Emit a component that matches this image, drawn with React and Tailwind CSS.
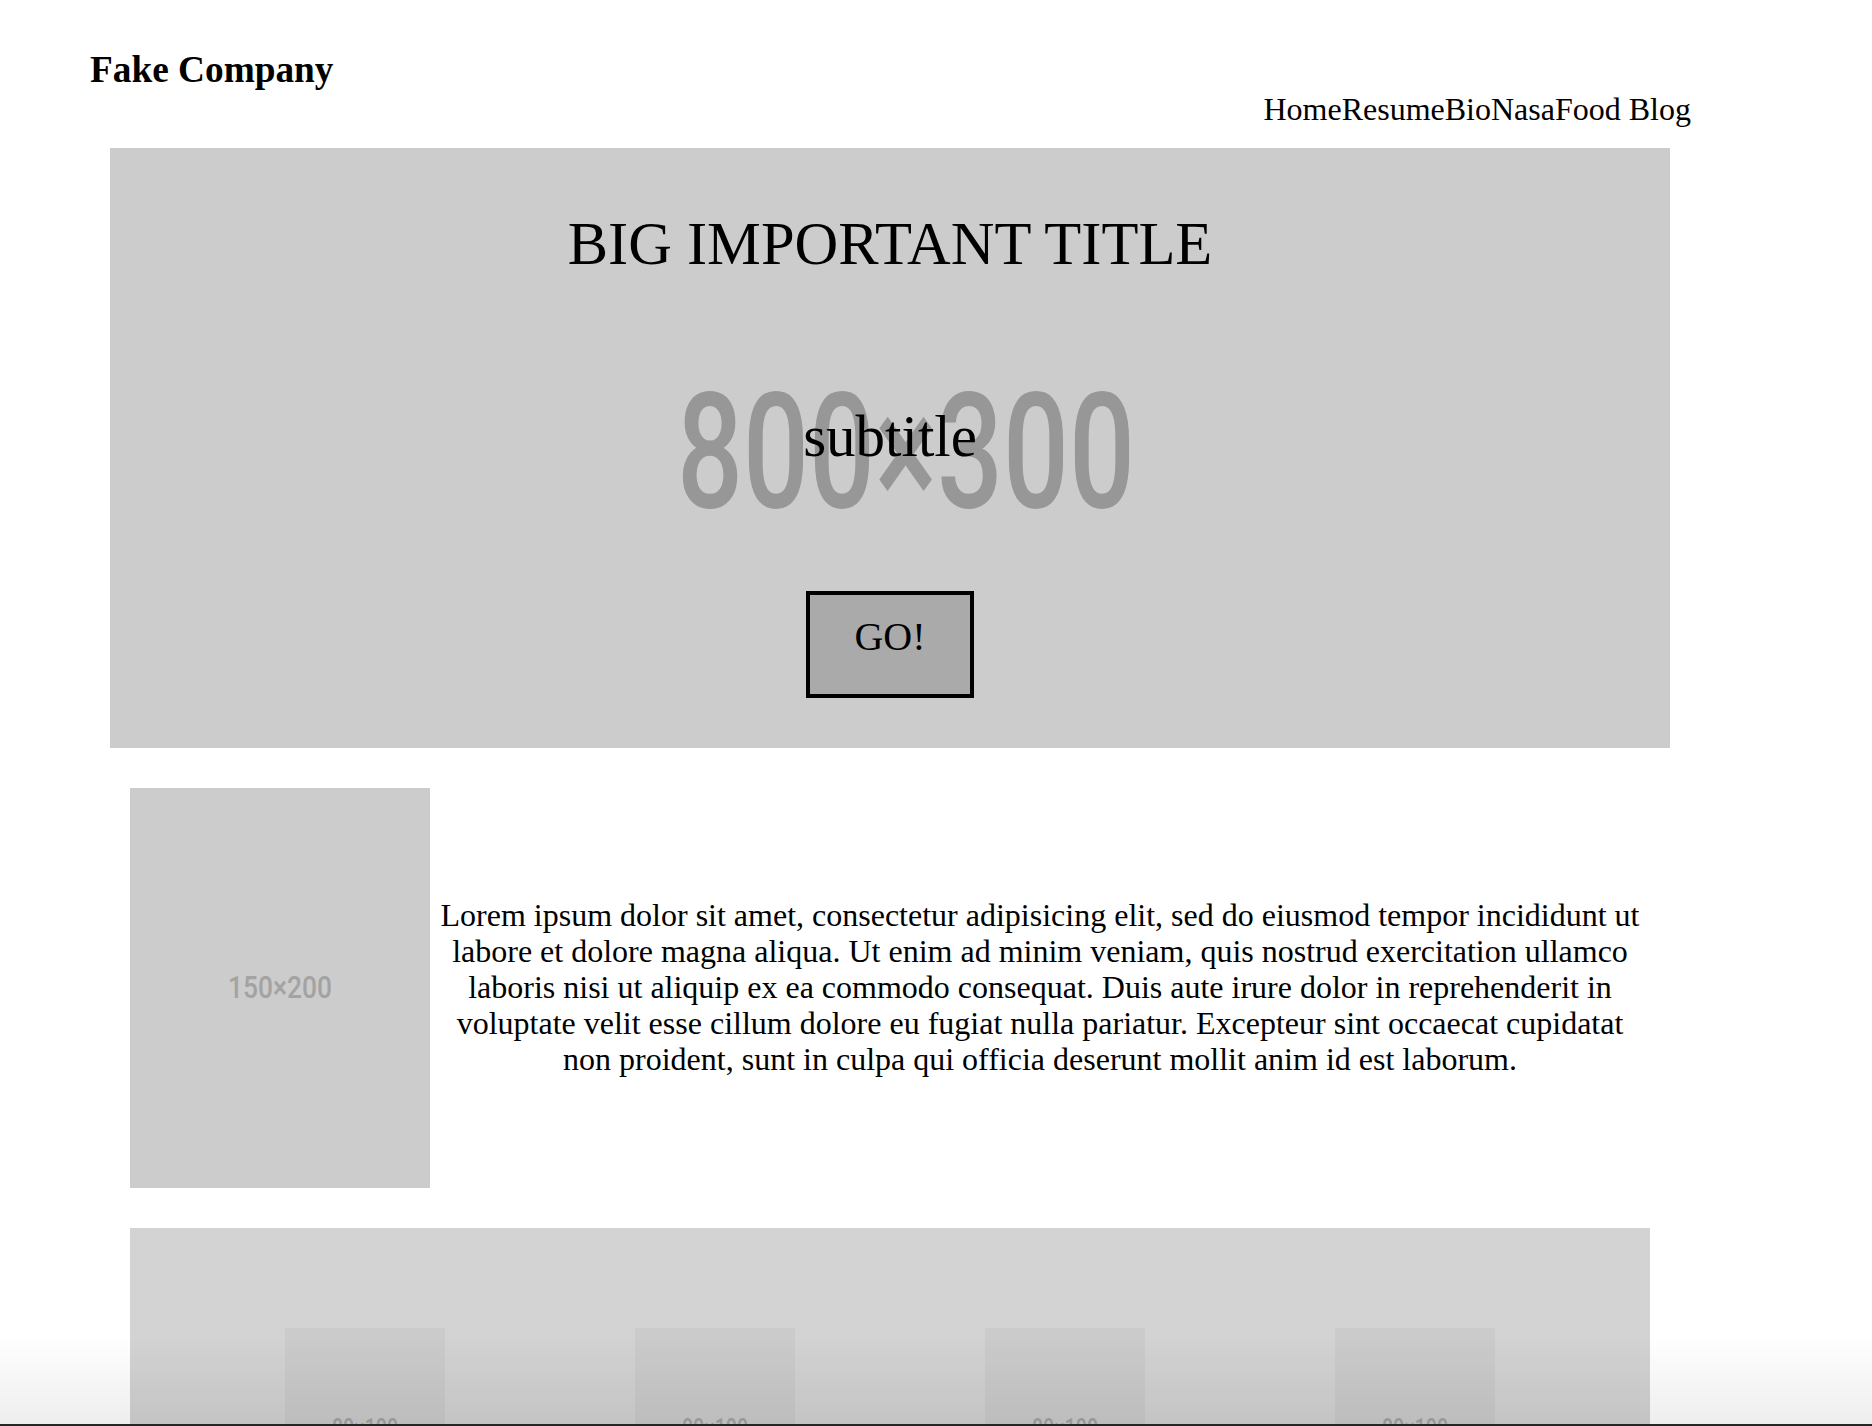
import React from 'react';

// placeholder label drawn like the placehold.it condensed digits
function PlaceLabel({ text, width, height, size, color }) {
  return (
    <svg width={width} height={height} viewBox={`0 0 ${width} ${height}`} className="block overflow-visible">
      <text
        x="0"
        y={height}
        fontSize={size}
        textLength={width}
        lengthAdjust="spacingAndGlyphs"
        fill={color}
        fontFamily="Roboto, 'Liberation Sans', sans-serif"
        fontWeight="500"
      >
        {text}
      </text>
    </svg>
  );
}

const navLinks = ['Home', 'Resume', 'Bio', 'Nasa', 'Food Blog'];

export default function App() {
  return (
    <div className="relative min-h-screen bg-white text-black font-['Liberation_Serif',serif]">
      <header className="pt-[48px] pl-[90px] pr-[181px]">
        <h1 className="text-[37.3px] leading-[44px] font-bold">Fake Company</h1>
        <nav className="-mt-px flex justify-end text-[32px] leading-[36px]">
          {navLinks.map((link) => (
            <a key={link} href="#" className="text-black no-underline">
              {link}
            </a>
          ))}
        </nav>
      </header>

      {/* hero */}
      <section className="relative mt-[21px] ml-[110px] w-[1560px] h-[600px] bg-[#cccccc]">
        <div className="absolute left-[567px] top-[244px]">
          <PlaceLabel text="800×300" width={458} height={115} size={162} color="#979797" />
        </div>
        <div className="relative flex flex-col items-center pt-[62px]">
          <h2 className="text-[60.5px] leading-[68px] font-normal">BIG IMPORTANT TITLE</h2>
          <h3 className="mt-[124px] text-[59px] leading-[68px] font-normal">subtitle</h3>
          <button className="mt-[121px] flex w-[168px] h-[107px] items-start justify-center border-4 border-black bg-[#aaaaaa] pt-[19px] text-[40px] leading-[45px] font-['Liberation_Serif',serif]">
            GO!
          </button>
        </div>
      </section>

      {/* about */}
      <section className="mt-[40px] ml-[130px] flex w-[1520px] items-center">
        <div className="flex h-[400px] w-[300px] shrink-0 items-center justify-center bg-[#cccccc] pb-[3px]">
          <PlaceLabel text="150×200" width={104} height={23} size={32} color="#a3a3a3" />
        </div>
        <p className="flex-1 pb-[2px] text-center text-[32px] leading-[36px]">
          Lorem ipsum dolor sit amet, consectetur adipisicing elit, sed do eiusmod tempor incididunt ut
          <br />
          labore et dolore magna aliqua. Ut enim ad minim veniam, quis nostrud exercitation ullamco
          <br />
          laboris nisi ut aliquip ex ea commodo consequat. Duis aute irure dolor in reprehenderit in
          <br />
          voluptate velit esse cillum dolore eu fugiat nulla pariatur. Excepteur sint occaecat cupidatat
          <br />
          non proident, sunt in culpa qui officia deserunt mollit anim id est laborum.
        </p>
      </section>

      {/* gallery */}
      <section className="mt-[40px] ml-[130px] flex w-[1520px] justify-around bg-[#d3d3d3] px-[60px] pt-[100px] pb-[100px]">
        {[0, 1, 2, 3].map((i) => (
          <div key={i} className="flex h-[200px] w-[160px] items-center justify-center bg-[#cbcbcb]">
            <PlaceLabel text="80×100" width={66} height={18} size={25} color="#a3a3a3" />
          </div>
        ))}
      </section>

      {/* bottom fade of the window */}
      <div className="pointer-events-none fixed inset-x-0 bottom-0 h-[90px] bg-gradient-to-b from-transparent to-black/[0.07]" />
      <div className="pointer-events-none fixed inset-x-0 bottom-0 h-[2px] bg-[#262626]" />
    </div>
  );
}
